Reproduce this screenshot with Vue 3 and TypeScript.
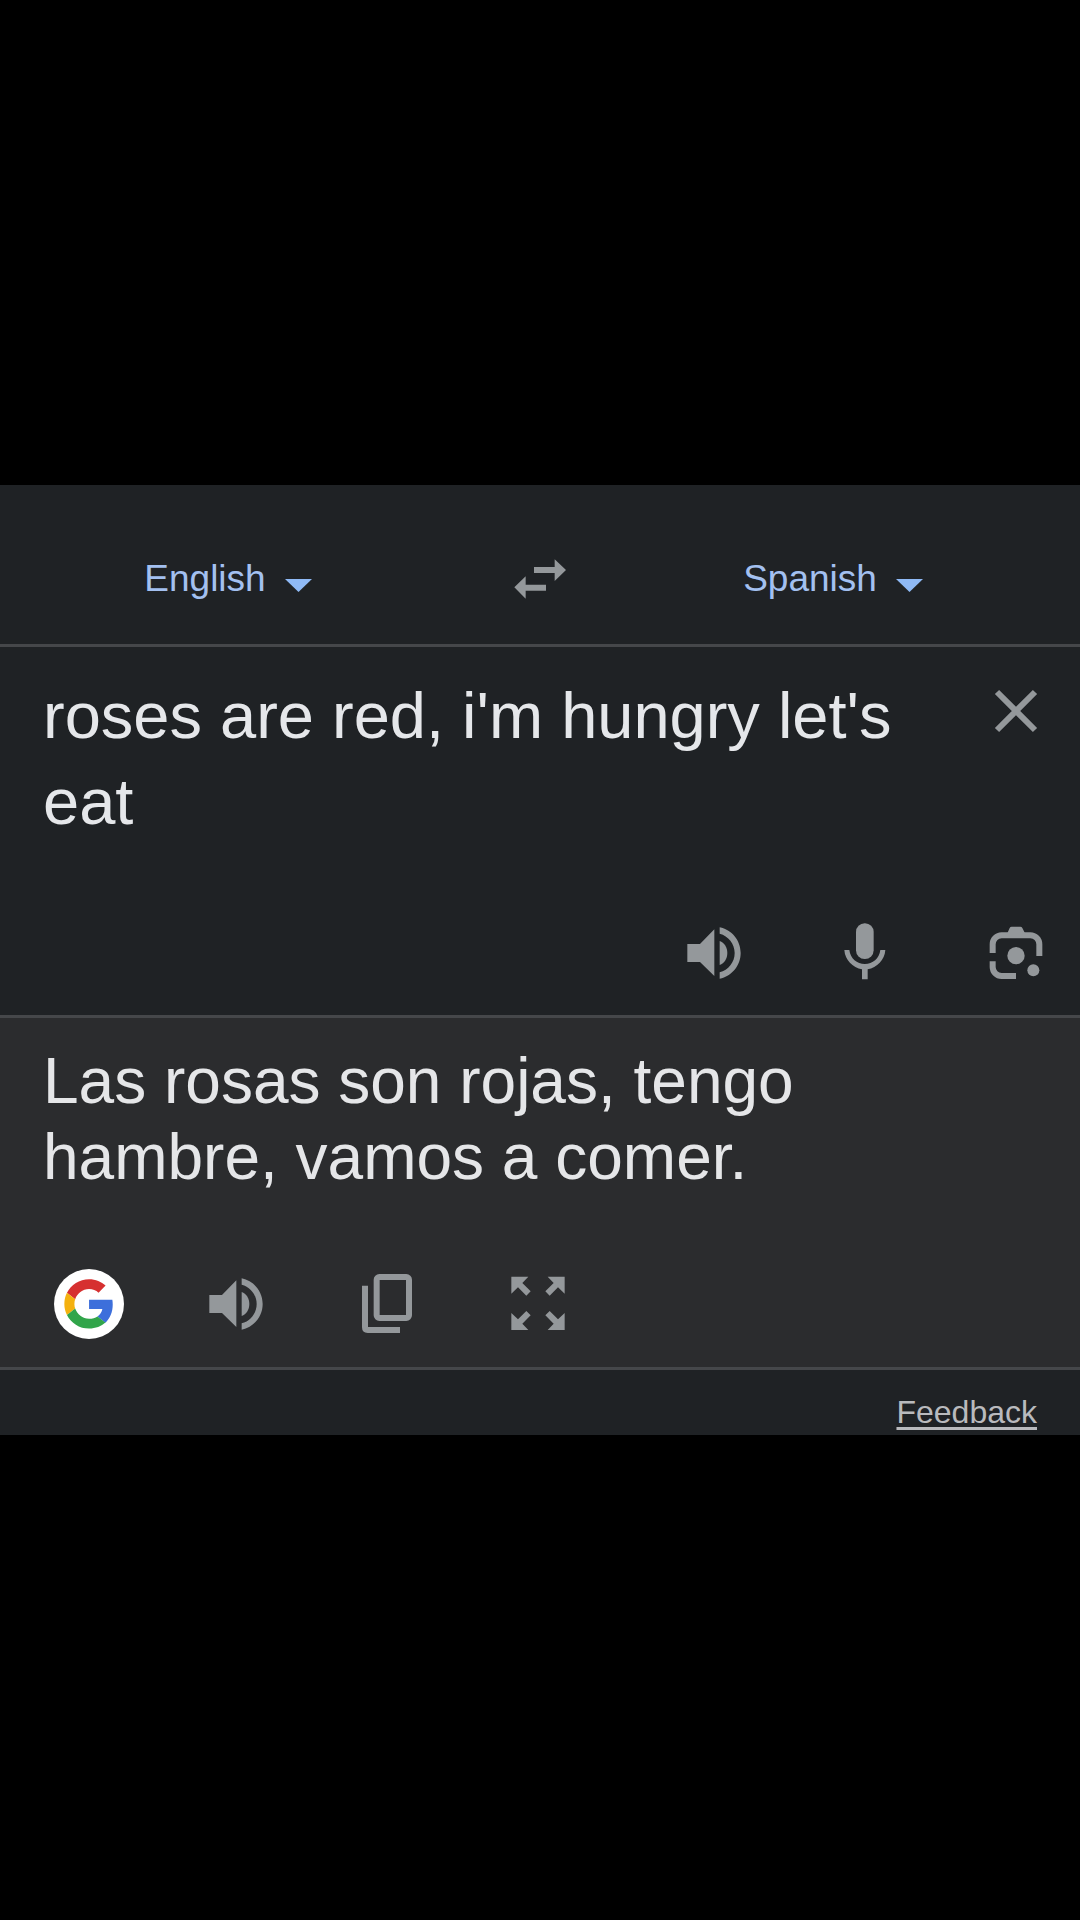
<script setup lang="ts">
import { ref } from 'vue'

const languages = ['English', 'Spanish']
const sourceLanguage = ref('English')
const targetLanguage = ref('Spanish')
const sourceText = ref("roses are red, i'm hungry let's eat")
const translation = ref('Las rosas son rojas, tengo hambre, vamos a comer.')

// Mirrors the top-left arrow of the full-screen icon into each corner.
const corners = ['1 1', '-1 1', '1 -1', '-1 -1']

function swapLanguages() {
  const language = sourceLanguage.value
  sourceLanguage.value = targetLanguage.value
  targetLanguage.value = language
  const text = sourceText.value
  sourceText.value = translation.value
  translation.value = text
}
</script>

<template>
  <main class="page">
    <div class="translator">
      <header class="languages">
        <label class="language source-language">
          <select v-model="sourceLanguage" aria-label="Source language">
            <option v-for="name in languages" :key="name">{{ name }}</option>
          </select>
          <svg class="caret" viewBox="0 0 27 27" aria-hidden="true"><path d="M0 13H27L13.5 26Z" /></svg>
        </label>
        <button class="icon-button" type="button" aria-label="Swap languages" @click="swapLanguages">
          <svg viewBox="1170 238 180 180">
            <path d="M1242 292H1304V269L1338 301L1304 334V310H1242Z" />
            <path d="M1278 345H1217V320L1183 353L1217 387V363H1278Z" />
          </svg>
        </button>
        <label class="language target-language">
          <select v-model="targetLanguage" aria-label="Target language">
            <option v-for="name in languages" :key="name">{{ name }}</option>
          </select>
          <svg class="caret" viewBox="0 0 27 27" aria-hidden="true"><path d="M0 13H27L13.5 26Z" /></svg>
        </label>
      </header>

      <section class="source">
        <div class="entry">
          <textarea v-model="sourceText" rows="2" spellcheck="false" aria-label="Source text"></textarea>
          <button class="icon-button clear" type="button" aria-label="Clear text" @click="sourceText = ''">
            <svg viewBox="0 0 60 60">
              <path class="line" d="M11 11L49 49M49 11L11 49" />
            </svg>
          </button>
        </div>
        <div class="tools source-tools">
          <button class="icon-button" type="button" aria-label="Listen to source text">
            <svg viewBox="74 69 180 180">
              <path d="M84 132H122L165 88V228L122 186H84Z" />
              <path d="M181 123C195 128 204 142 204 159S195 190 181 195Z" />
              <path d="M181 82C217 89 244 121 244 159S217 229 181 236V217C207 210 226 187 226 159S207 108 181 101Z" />
            </svg>
          </button>
          <button class="icon-button" type="button" aria-label="Speak">
            <svg viewBox="526 69 180 180">
              <rect x="589" y="70" width="53" height="107" rx="26" />
              <path d="M554 150H569C572 176 592 192 615.500 192S659 176 662 150H677C675 180 652 203 624 208V238H607V208C579 203 556 180 554 150Z" />
            </svg>
          </button>
          <button class="icon-button" type="button" aria-label="Translate from camera">
            <svg viewBox="977 69 180 180">
              <path class="thick" d="M997 159V133A27 27 0 0 1 1024 106H1110A27 27 0 0 1 1137 133V168M997 184V201A27 27 0 0 0 1024 228H1067" />
              <path d="M1041 100L1048 84Q1050 80 1054 80H1080Q1084 80 1086 84L1094 100Z" />
              <circle cx="1067" cy="167" r="26" />
              <circle cx="1119" cy="211" r="18" />
            </svg>
          </button>
        </div>
      </section>

      <section class="target">
        <p class="translation">{{ translation }}</p>
        <div class="tools">
          <button class="logo" type="button" aria-label="Search with Google">
            <svg viewBox="0 0 210 210">
              <g transform="translate(31 30.500) scale(3.090)">
                <path fill="#d63030" d="M24 9.5c3.540 0 6.710 1.220 9.210 3.600l6.850-6.850C35.900 2.380 30.470 0 24 0 14.620 0 6.510 5.380 2.560 13.220l7.980 6.190C12.430 13.720 17.740 9.500 24 9.500z" />
                <path fill="#3d6fdb" d="M46.980 24.550c0-1.570-.15-3.090-.38-4.550H24v9.020h12.940c-.58 2.960-2.260 5.480-4.780 7.180l7.730 6c4.510-4.180 7.090-10.360 7.090-17.650z" />
                <path fill="#f4b10f" d="M10.530 28.590c-.48-1.450-.76-2.990-.76-4.590s.27-3.140.76-4.590l-7.980-6.190C.92 16.460 0 20.120 0 24c0 3.880.92 7.540 2.560 10.780l7.970-6.190z" />
                <path fill="#31a54a" d="M24 48c6.480 0 11.930-2.130 15.890-5.810l-7.730-6c-2.150 1.450-4.920 2.300-8.160 2.300-6.260 0-11.570-4.220-13.470-9.910l-7.980 6.190C6.510 42.620 14.620 48 24 48z" />
              </g>
            </svg>
          </button>
          <button class="icon-button" type="button" aria-label="Listen to translation">
            <svg viewBox="74 69 180 180">
              <path d="M84 132H122L165 88V228L122 186H84Z" />
              <path d="M181 123C195 128 204 142 204 159S195 190 181 195Z" />
              <path d="M181 82C217 89 244 121 244 159S217 229 181 236V217C207 210 226 187 226 159S207 108 181 101Z" />
            </svg>
          </button>
          <button class="icon-button" type="button" aria-label="Copy translation">
            <svg viewBox="77 69 180 180">
              <rect class="thick" x="136" y="78" width="97" height="123" rx="8" />
              <path class="thick" d="M101 104V229Q101 237 109 237H206" />
            </svg>
          </button>
          <button class="icon-button" type="button" aria-label="Full screen">
            <svg viewBox="-90 -88 180 180">
              <path
                v-for="corner in corners"
                :key="corner"
                :transform="`scale(${corner})`"
                d="M-80 -80H-29L-47 -61L-22 -36L-35 -23L-60 -48L-80 -29Z"
              />
            </svg>
          </button>
        </div>
      </section>

      <footer class="footer"><a href="#feedback">Feedback</a></footer>
    </div>
  </main>
</template>

<style>
body {
  background: #000;
}
</style>

<style scoped>
.page {
  display: flex;
  align-items: center;
  min-height: 100vh;
  font-family: "Liberation Sans", Arial, sans-serif;
}

.translator {
  flex: 1;
  min-width: 0;
  background: #1f2225;
}

.languages {
  display: grid;
  grid-template-columns: 1fr auto 1fr;
  align-items: center;
  padding: 64px 0 35px;
  border-bottom: 3px solid #45474a;
}

.language {
  display: flex;
  align-items: center;
  justify-content: center;
  gap: 19px;
}

.source-language {
  padding-right: 54px;
}

.target-language {
  padding-left: 16px;
}

.language select {
  appearance: none;
  field-sizing: content;
  margin: 0;
  padding: 0;
  border: 0;
  background: transparent;
  color: #a3c0f0;
  font: 37px/46px "Liberation Sans", Arial, sans-serif;
}

.caret {
  width: 27px;
  height: 27px;
  fill: #8fbaf6;
}

.icon-button,
.logo {
  display: block;
  flex: none;
  width: 60px;
  height: 60px;
  padding: 0;
  border: 0;
  background: transparent;
}

.icon-button svg,
.logo svg {
  display: block;
  width: 100%;
  height: 100%;
}

.icon-button svg {
  fill: #94989b;
}

.icon-button .thick,
.icon-button .line {
  fill: none;
  stroke: #94989b;
  stroke-width: 18;
}

.icon-button .line {
  stroke-width: 6;
}

.source {
  padding: 26px 34px 32px 43px;
  border-bottom: 3px solid #45474a;
}

.entry {
  display: flex;
  align-items: flex-start;
  gap: 32px;
}

.entry textarea {
  flex: 1;
  min-width: 0;
  height: 172px;
  margin: 0;
  padding: 0;
  border: 0;
  outline: 0;
  resize: none;
  overflow: hidden;
  background: transparent;
  color: #e5e7ea;
  font: 65px/86px "Liberation Sans", Arial, sans-serif;
}

.clear {
  margin-top: 8px;
}

.tools {
  display: flex;
  align-items: center;
  gap: 91px;
}

.source-tools {
  justify-content: flex-end;
  margin-top: 78px;
}

.target {
  padding: 25px 43px 28px;
  border-bottom: 3px solid #45474a;
  background: #2b2c2e;
}

.translation {
  margin: 0 0 74px;
  color: #e5e6e8;
  font-size: 64px;
  line-height: 76px;
}

.logo {
  width: 70px;
  height: 70px;
  margin: 0 -9px 0 11px;
  border-radius: 50%;
  background: #fff;
}

.footer {
  display: flex;
  justify-content: flex-end;
  padding: 22px 43px 3px;
}

.footer a {
  color: #b9babd;
  font-size: 32px;
  line-height: 40px;
  text-decoration-thickness: 3px;
  text-underline-offset: 4px;
  text-decoration-skip-ink: none;
}
</style>
